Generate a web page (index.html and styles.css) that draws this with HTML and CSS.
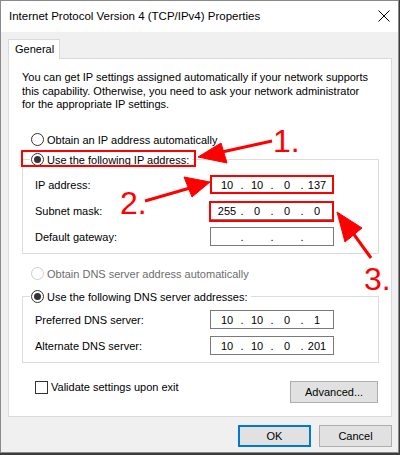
FILE: index.html
```html
<!DOCTYPE html>
<html lang="en">
<head>
    <meta charset="UTF-8">
    <title>Internet Protocol Version 4 (TCP/IPv4) Properties</title>
    <link rel="stylesheet" href="styles.css">
</head>
<body>
    <div class="window">
        <div class="titlebar">
            <span class="title">Internet Protocol Version 4 (TCP/IPv4) Properties</span>
            <svg class="close" width="12" height="12" viewBox="0 0 12 12">
                <path d="M0.5 0.5 L11.5 11.5 M11.5 0.5 L0.5 11.5" stroke="#000" stroke-width="1" fill="none"/>
            </svg>
        </div>

        <div class="dialog-body">
            <div class="tabs">
                <div class="tab">General</div>
            </div>

            <div class="panel">
                <p class="intro">You can get IP settings assigned automatically if your network supports this capability. Otherwise, you need to ask your network administrator for the appropriate IP settings.</p>

                <div class="radio"><span class="radio-mark"></span>Obtain an IP address automatically</div>

                <fieldset class="group">
                    <legend><div class="radio"><span class="radio-mark checked"></span>Use the following IP address:</div></legend>
                    <div class="field-row">
                        <span class="field-label">IP address:</span>
                        <div class="ip-field">
                            <span class="octet">10</span><span class="dot">.</span><span class="octet">10</span><span class="dot">.</span><span class="octet">0</span><span class="dot">.</span><span class="octet">137</span>
                        </div>
                    </div>
                    <div class="field-row">
                        <span class="field-label">Subnet mask:</span>
                        <div class="ip-field">
                            <span class="octet">255</span><span class="dot">.</span><span class="octet">0</span><span class="dot">.</span><span class="octet">0</span><span class="dot">.</span><span class="octet">0</span>
                        </div>
                    </div>
                    <div class="field-row">
                        <span class="field-label">Default gateway:</span>
                        <div class="ip-field">
                            <span class="octet"></span><span class="dot">.</span><span class="octet"></span><span class="dot">.</span><span class="octet"></span><span class="dot">.</span><span class="octet"></span>
                        </div>
                    </div>
                </fieldset>

                <div class="radio disabled"><span class="radio-mark"></span>Obtain DNS server address automatically</div>

                <fieldset class="group dns">
                    <legend><div class="radio"><span class="radio-mark checked"></span>Use the following DNS server addresses:</div></legend>
                    <div class="field-row">
                        <span class="field-label">Preferred DNS server:</span>
                        <div class="ip-field">
                            <span class="octet">10</span><span class="dot">.</span><span class="octet">10</span><span class="dot">.</span><span class="octet">0</span><span class="dot">.</span><span class="octet">1</span>
                        </div>
                    </div>
                    <div class="field-row">
                        <span class="field-label">Alternate DNS server:</span>
                        <div class="ip-field">
                            <span class="octet">10</span><span class="dot">.</span><span class="octet">10</span><span class="dot">.</span><span class="octet">0</span><span class="dot">.</span><span class="octet">201</span>
                        </div>
                    </div>
                </fieldset>

                <div class="options">
                    <div class="check"><span class="check-mark"></span>Validate settings upon exit</div>
                    <button class="btn advanced">Advanced...</button>
                </div>
            </div>

            <div class="actions">
                <button class="btn default">OK</button>
                <button class="btn">Cancel</button>
            </div>
        </div>

        <!-- annotations drawn over the dialog -->
        <svg class="annotations" width="400" height="455" viewBox="0 0 400 455">
            <g fill="none" stroke="#f00" stroke-width="2">
                <rect x="22" y="151" width="173" height="15"/>
                <rect x="211" y="176" width="122" height="17"/>
                <rect x="210" y="202" width="123" height="19"/>
            </g>
            <g stroke="#f00" stroke-width="3" fill="#f00">
                <line x1="272" y1="141" x2="222" y2="152"/>
                <polygon points="198,157 221,143 227,163" stroke-width="1"/>
                <line x1="145" y1="201" x2="190" y2="188"/>
                <polygon points="210,182 184,177 192,197" stroke-width="1"/>
                <line x1="371" y1="258" x2="350" y2="229"/>
                <polygon points="337,212 362,228 345,242" stroke-width="1"/>
            </g>
            <g class="marks" fill="#f00">
                <text x="273" y="152">1.</text>
                <text x="120" y="214">2.</text>
                <text x="364" y="290">3.</text>
            </g>
        </svg>
    </div>
</body>
</html>
```

FILE: styles.css
```css
:root {
    --face: #f0f0f0;
    --panel-border: #d9d9d9;
    --group-border: #dcdcdc;
    --field-border: #7a7a7a;
    --button-bg: #e1e1e1;
    --button-border: #adadad;
    --accent: #0078d7;
}

body {
    margin: 0;
    background: #3c3c3c;
    font-family: "Liberation Sans", Arial, sans-serif;
    font-size: 11px;
    color: #000;
}

.window {
    position: relative;
    width: 397px;
    height: 451px;
    border: 1px solid #8a8a8a;
    background: var(--face);
    overflow: hidden;
}

.titlebar {
    height: 31px;
    background: #fff;
    display: flex;
    align-items: center;
    justify-content: space-between;
    padding: 0 8px 0 8px;
}

.title {
    font-size: 11.5px;
    margin-top: -1px;
}

.close {
    margin-top: -1px;
}

.dialog-body {
    padding: 7px 6px 0 7px;
}

.tabs {
    display: flex;
}

.tab {
    width: 52px;
    height: 20px;
    box-sizing: border-box;
    background: #fff;
    border: 1px solid var(--panel-border);
    border-bottom: none;
    margin-bottom: -1px;
    position: relative;
    z-index: 1;
    line-height: 19px;
    padding-left: 6px;
}

.panel {
    width: 384px;
    box-sizing: border-box;
    background: #fff;
    border: 1px solid var(--panel-border);
    padding: 12px 12px 13px 13px;
}

.intro {
    margin: 0;
    line-height: 13.5px;
    width: 350px;
}

.radio {
    display: flex;
    align-items: center;
    height: 20px;
    padding-left: 9px;
}

.radio-mark {
    width: 11px;
    height: 11px;
    border: 1px solid #333;
    border-radius: 50%;
    margin-right: 3px;
    position: relative;
    background: #fff;
}

.radio-mark.checked::after {
    content: "";
    position: absolute;
    left: 2px;
    top: 2px;
    width: 7px;
    height: 7px;
    border-radius: 50%;
    background: #333;
}

.radio.disabled {
    color: #6d6d6d;
}

.radio.disabled .radio-mark {
    border-color: #cccccc;
}

.intro + .radio {
    margin-top: 18px;
}

.group {
    margin: 0;
    min-width: 0;
    border: 1px solid var(--group-border);
    padding: 2px 12px 3px 12px;
}

.group legend {
    padding: 0 3px 0 1px;
    margin-left: -5px;
}

.group legend .radio {
    padding-left: 0;
}

.group + .radio {
    margin-top: 10px;
}

.group.dns {
    margin-top: 3px;
    padding-top: 0;
}

.field-row {
    display: flex;
    align-items: center;
    height: 26px;
}

.field-label {
    width: 175px;
}

.ip-field {
    display: flex;
    width: 124px;
    height: 19px;
    box-sizing: border-box;
    border: 1px solid var(--field-border);
    padding-left: 4px;
    align-items: center;
}

.octet {
    width: 24px;
    text-align: center;
}

.dot {
    width: 6px;
    text-align: center;
}

.options {
    display: flex;
    justify-content: space-between;
    align-items: flex-start;
    margin-top: 18px;
    padding-left: 13px;
}

.check {
    display: flex;
    align-items: center;
    height: 13px;
}

.check-mark {
    width: 11px;
    height: 11px;
    border: 1px solid #333;
    margin-right: 3px;
}

.btn {
    font-family: inherit;
    font-size: 11px;
    color: #000;
    background: var(--button-bg);
    border: 1px solid var(--button-border);
    height: 22px;
    width: 73px;
    padding: 0;
}

.advanced {
    width: 88px;
    margin-right: 1px;
}

.actions {
    display: flex;
    justify-content: flex-end;
    gap: 8px;
    margin-top: 8px;
    width: 384px;
}

.btn.default {
    border: 2px solid var(--accent);
}

.annotations {
    position: absolute;
    left: -1px;
    top: -1px;
    pointer-events: none;
}

.marks text {
    font-family: "Liberation Sans", Arial, sans-serif;
    font-size: 32px;
}
```
